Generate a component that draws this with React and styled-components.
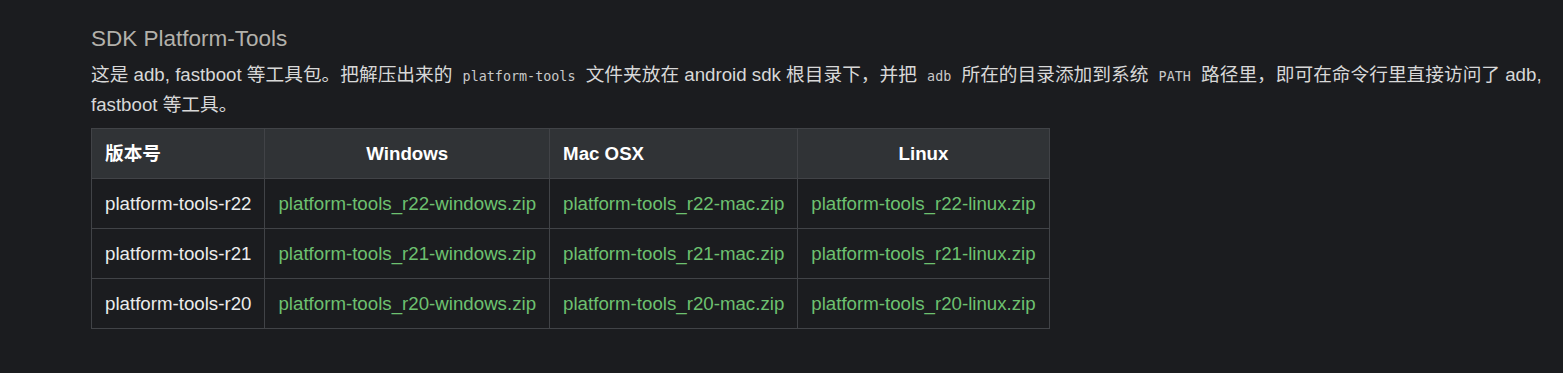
import React from "react";
import styled, { createGlobalStyle } from "styled-components";

const GlobalStyle = createGlobalStyle`
  body {
    margin: 0;
    background: #1b1c1f;
    font-family: "Liberation Sans", Arial, "Noto Sans CJK SC", sans-serif;
  }
`;

const releases = ["r22", "r21", "r20"];

const App = () => {
  return (
    <>
      <GlobalStyle />
      <Page>
        <Title>SDK Platform-Tools</Title>
        <Desc>
          这是 adb, fastboot 等工具包。把解压出来的 <Code>platform-tools</Code>{" "}
          文件夹放在 android sdk 根目录下，并把 <Code>adb</Code> 所在的目录添加到系统{" "}
          <Code>PATH</Code> 路径里，即可在命令行里直接访问了 adb, fastboot 等工具。
        </Desc>
        <Table>
          <thead>
            <tr>
              <Th>版本号</Th>
              <Th $center>Windows</Th>
              <Th>Mac OSX</Th>
              <Th $center>Linux</Th>
            </tr>
          </thead>
          <tbody>
            {releases.map((r) => (
              <tr key={r}>
                <Td>platform-tools-{r}</Td>
                <Td>
                  <DownloadLink href="#">platform-tools_{r}-windows.zip</DownloadLink>
                </Td>
                <Td>
                  <DownloadLink href="#">platform-tools_{r}-mac.zip</DownloadLink>
                </Td>
                <Td>
                  <DownloadLink href="#">platform-tools_{r}-linux.zip</DownloadLink>
                </Td>
              </tr>
            ))}
          </tbody>
        </Table>
      </Page>
    </>
  );
};

export default App;

const Page = styled.div`
  padding: 26px 0 40px 91px;
  width: 1462px;
`;

const Title = styled.h2`
  margin: 0;
  font-size: 22.5px;
  line-height: 26px;
  font-weight: normal;
  color: #b3b1ab;
`;

const Desc = styled.p`
  margin: 9px 0 9px;
  font-size: 18.7px;
  line-height: 28px;
  color: #d8d8d8;
`;

const Code = styled.code`
  font-family: "DejaVu Sans Mono", "Liberation Mono", monospace;
  font-size: 13.4px;
  color: #c9c9c9;
  padding: 0 5px;
`;

const Table = styled.table`
  border-collapse: collapse;
  font-size: 18.7px;
  line-height: 27px;
  color: #ececec;
`;

const Th = styled.th`
  background: #303336;
  color: #fff;
  font-weight: bold;
  text-align: ${(p) => (p.$center ? "center" : "left")};
  padding: 11px 13px;
  border: 1px solid #414347;
`;

const Td = styled.td`
  padding: 11px 13px;
  border: 1px solid #414347;
  white-space: nowrap;
`;

const DownloadLink = styled.a`
  color: #6dc170;
  text-decoration: none;
`;
